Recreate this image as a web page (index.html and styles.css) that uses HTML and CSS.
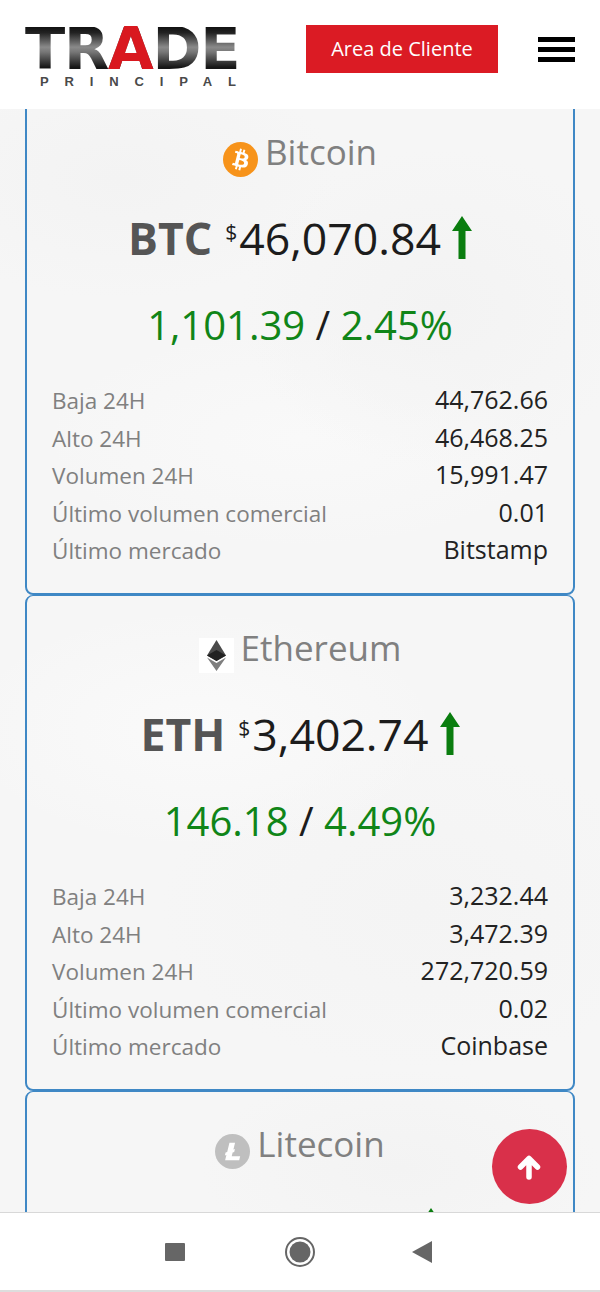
FILE: index.html
```html
<!DOCTYPE html>
<html lang="es">
<head>
<meta charset="utf-8">
<title>Trade Principal</title>
<link rel="stylesheet" href="styles.css">
</head>
<body>
<div class="page">
  <header class="top">
    <div class="logo">
      <div class="logo-main">TR<span class="logo-a">A</span>DE</div>
      <div class="logo-sub">PRINCIPAL</div>
    </div>
    <a class="client-btn">Area de Cliente</a>
    <div class="burger"><span></span><span></span><span></span></div>
  </header>
  <main class="content">
    <div class="cards">
      <section class="card">
        <h2 class="coin"><svg class="coin-icon" viewBox="0 0 32 32"><circle cx="16" cy="16" r="16" fill="#f7931a"/><path fill="#fff" d="M23.189 14.02c.314-2.096-1.283-3.223-3.465-3.975l.708-2.84-1.728-.43-.69 2.765c-.454-.114-.92-.22-1.385-.326l.695-2.783L15.596 6l-.708 2.839c-.376-.086-.746-.17-1.104-.26l.002-.009-2.384-.595-.46 1.846s1.283.294 1.256.312c.7.175.826.638.805 1.006l-.806 3.235c.048.012.11.03.18.057l-.183-.045-1.13 4.532c-.086.212-.303.531-.793.41.018.025-1.256-.313-1.256-.313l-.858 1.978 2.25.561c.418.105.828.215 1.231.318l-.715 2.872 1.727.43.708-2.84c.472.127.93.245 1.378.357l-.706 2.828 1.728.43.715-2.866c2.948.558 5.164.333 6.097-2.333.752-2.146-.037-3.385-1.588-4.192 1.13-.26 1.98-1.003 2.207-2.538zm-3.95 5.538c-.533 2.147-4.148.986-5.32.695l.95-3.805c1.172.293 4.929.872 4.37 3.11zm.535-5.569c-.487 1.953-3.495.96-4.47.717l.86-3.45c.975.243 4.118.696 3.61 2.733z"/></svg>Bitcoin</h2>
        <div class="price"><b class="sym">BTC</b><sup class="cur">$</sup>46,070.84<svg class="up" viewBox="0 0 20 44"><path fill="#0a7d0f" d="M10 0 20 15H13.5V43H6.500V15H0Z"/></svg></div>
        <div class="change"><span class="g">1,101.39</span> / <span class="g">2.45%</span></div>
        <dl class="stats">
          <div class="row"><dt>Baja 24H</dt><dd>44,762.66</dd></div>
          <div class="row"><dt>Alto 24H</dt><dd>46,468.25</dd></div>
          <div class="row"><dt>Volumen 24H</dt><dd>15,991.47</dd></div>
          <div class="row"><dt>Último volumen comercial</dt><dd>0.01</dd></div>
          <div class="row"><dt>Último mercado</dt><dd>Bitstamp</dd></div>
        </dl>
      </section>
      <section class="card">
        <h2 class="coin"><svg class="coin-icon" viewBox="0 0 35 35"><rect width="35" height="35" fill="#fff"/><path fill="#4a4a4a" d="M17.500 2 8 17.500 17.500 23 27 17.500Z"/><path fill="#7f7f7f" d="M8 19.500 17.500 33 27 19.500 17.500 25Z"/><path fill="#222" d="M17.500 12 8 17.500 17.500 23 27 17.500Z"/></svg>Ethereum</h2>
        <div class="price"><b class="sym">ETH</b><sup class="cur">$</sup>3,402.74<svg class="up" viewBox="0 0 20 44"><path fill="#0a7d0f" d="M10 0 20 15H13.5V43H6.500V15H0Z"/></svg></div>
        <div class="change"><span class="g">146.18</span> / <span class="g">4.49%</span></div>
        <dl class="stats">
          <div class="row"><dt>Baja 24H</dt><dd>3,232.44</dd></div>
          <div class="row"><dt>Alto 24H</dt><dd>3,472.39</dd></div>
          <div class="row"><dt>Volumen 24H</dt><dd>272,720.59</dd></div>
          <div class="row"><dt>Último volumen comercial</dt><dd>0.02</dd></div>
          <div class="row"><dt>Último mercado</dt><dd>Coinbase</dd></div>
        </dl>
      </section>
      <section class="card">
        <h2 class="coin"><svg class="coin-icon" viewBox="0 0 32 32"><circle cx="16" cy="16" r="16" fill="#bfbfbf"/><path fill="#fff" d="M10.427 19.214L9 19.768l.688-2.759 1.444-.58L13.213 8h5.129l-1.519 6.196 1.41-.571-.68 2.75-1.427.571-.848 3.483H23L22.127 24H9.252z"/></svg>Litecoin</h2>
        <div class="price"><svg class="up up-solo" viewBox="0 0 20 44"><path fill="#0a7d0f" d="M10 0 20 15H13.5V43H6.500V15H0Z"/></svg></div>
      </section>
    </div>
  </main>
  <button class="to-top" aria-label="Subir"><svg viewBox="0 0 28 28"><path fill="none" stroke="#fff" stroke-width="5.500" stroke-linecap="round" stroke-linejoin="round" d="M14 24V6M5.500 14 14 5.500 22.500 14"/></svg></button>
  <nav class="sysnav">
    <svg class="nav-icon" viewBox="0 0 20 18"><rect width="20" height="18" rx="1" fill="#666"/></svg>
    <svg class="nav-icon" viewBox="0 0 30 30"><circle cx="15" cy="15" r="14" fill="none" stroke="#666" stroke-width="2"/><circle cx="15" cy="15" r="10.500" fill="#666"/></svg>
    <svg class="nav-icon" viewBox="0 0 20 22"><path fill="#666" d="M20 0V22L0 11Z"/></svg>
  </nav>
</div>
</body>
</html>
```
FILE: styles.css
```css
* { box-sizing: border-box; }
html, body { margin: 0; padding: 0; }
body { font-family: "Open Sans", sans-serif; background: #f6f6f6; }
.page { position: relative; width: 600px; height: 1292px; display: flex; flex-direction: column; overflow: hidden; }

.top { height: 109px; flex: none; background: #fff; display: flex; align-items: flex-start; padding: 25px 25px 0; position: relative; z-index: 2; }
.logo { width: 212px; height: 62px; margin-top: 2px; font-family: "DejaVu Sans", sans-serif; font-weight: 700; }
.logo-main { font-size: 59px; line-height: 43px; height: 48px; letter-spacing: -1.300px; white-space: nowrap; background: linear-gradient(#111 0, #222 12%, #8a8a8a 42%, #777 52%, #161616 84%); -webkit-background-clip: text; background-clip: text; color: transparent; }
.logo-a { color: #d9181f; }
.logo-sub { font-family: "Liberation Sans", sans-serif; font-size: 13px; line-height: 14px; color: #4a4a4a; padding-left: 15px; letter-spacing: 15.850px; white-space: nowrap; }
.client-btn { margin-left: 69px; width: 192px; height: 48px; background: #db1b24; color: #fff; font-size: 20px; line-height: 48px; text-align: center; }
.burger { margin-left: auto; margin-top: 12px; width: 37px; display: flex; flex-direction: column; gap: 5px; }
.burger span { height: 5px; background: #000; }

.content {
  flex: 1; overflow: hidden; padding: 0 25px;
  background:
    radial-gradient(ellipse 220px 120px at 120px 70px, #f3f3f3, transparent),
    radial-gradient(ellipse 200px 160px at 440px 200px, #f3f3f3, transparent),
    radial-gradient(ellipse 260px 110px at 300px 330px, #f9f9f9, transparent),
    radial-gradient(ellipse 240px 120px at 200px 620px, #fafafa, transparent),
    radial-gradient(ellipse 260px 160px at 420px 800px, #f4f4f4, transparent),
    radial-gradient(ellipse 200px 100px at 400px 1060px, #f3f3f3, transparent),
    #f6f6f6;
}
.cards { margin-top: -10px; display: flex; flex-direction: column; }
.card { height: 496px; flex: none; border: 2px solid #3f88c5; border-width: 1.500px 2px 2.500px; border-radius: 8px; padding: 0 25px; }
.coin { margin: 29px 0 0; height: 48px; display: flex; justify-content: center; font-size: 35px; font-weight: 400; line-height: 46px; color: #808080; }
.coin-icon { width: 35px; height: 35px; margin: 13px 7px 0 0; flex: none; }
.price { margin-top: 31px; height: 60px; display: flex; justify-content: center; align-items: baseline; font-size: 44.600px; line-height: 60px; color: #1c1c1c; white-space: pre; }
.sym { font-weight: 700; color: #555; }
.cur { font-size: 21px; line-height: 0; margin: 24px 2px 0 13px; align-self: flex-start; }
.up { width: 20px; height: 44px; margin-left: 11px; align-self: center; flex: none; }
.up-solo { margin-left: 261px; }
.change { margin-top: 31px; text-align: center; font-size: 40px; line-height: 52px; color: #1c1c1c; }
.g { color: #108518; }
.stats { margin: 30px 0 0; }
.row { display: flex; justify-content: space-between; align-items: baseline; height: 37.500px; font-size: 22.500px; line-height: 37.500px; }
.row dt { color: #808080; }
.row dd { margin: 0; color: #222; font-size: 25px; }

.to-top { position: absolute; left: 491.500px; top: 1129px; width: 75px; height: 75px; border-radius: 50%; border: 0; padding: 0; background: #d9304a; display: flex; align-items: center; justify-content: center; z-index: 3; }
.to-top svg { width: 28px; height: 28px; }

.sysnav { height: 80px; flex: none; background: #fff; border-top: 1px solid #d8d8d8; border-bottom: 2px solid #ddd; position: relative; z-index: 2; display: flex; align-items: center; }
.nav-icon { flex: none; }
.nav-icon:nth-child(1) { width: 20px; height: 18px; margin-left: 165px; }
.nav-icon:nth-child(2) { width: 30px; height: 30px; margin-left: 100px; }
.nav-icon:nth-child(3) { width: 20px; height: 22px; margin-left: 97px; }
```
